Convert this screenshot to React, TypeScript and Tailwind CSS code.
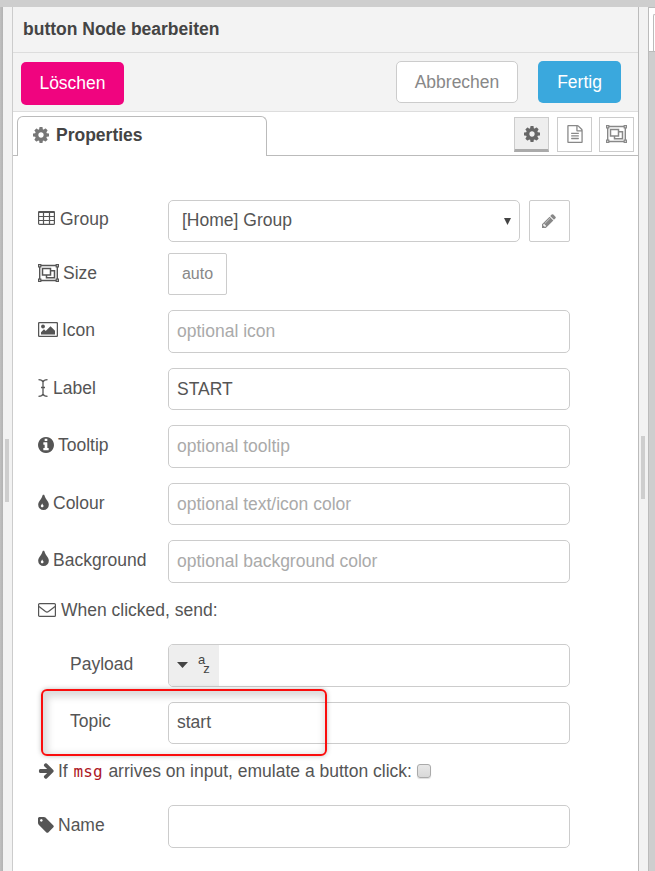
import type { ReactNode } from "react";

const paths = {
  cog: "M1152 896q0-106-75-181t-181-75-181 75-75 181 75 181 181 75 181-75 75-181zm512-109v222q0 12-8 23t-20 13l-185 28q-19 54-39 91 35 50 107 138 10 12 10 25t-9 23q-27 37-99 108t-94 71q-12 0-26-9l-138-108q-44 23-91 38-16 136-29 186-7 28-36 28h-222q-14 0-24.5-8.5t-11.5-21.5l-28-184q-49-16-90-37l-141 107q-10 9-25 9-14 0-25-11-126-114-165-168-7-10-7-23 0-12 8-23 15-21 51-66.5t54-70.5q-27-50-41-99l-183-27q-13-2-21-12.5t-8-23.5v-222q0-12 8-23t19-13l186-28q14-46 39-92-40-57-107-138-10-12-10-24 0-10 9-23 26-36 98.5-107.5t94.5-71.5q13 0 26 10l138 107q44-23 91-38 16-136 29-186 7-28 36-28h222q14 0 24.5 8.5t11.5 21.5l28 184q49 16 90 37l142-107q9-9 24-9 13 0 25 10 129 119 165 170 7 8 7 22 0 12-8 23-15 21-51 66.5t-54 70.5q26 50 41 98l183 28q13 2 21 12.5t8 23.5z",
  pencil:
    "M491 1536l91-91-235-235-91 91v107h128v128h107zm523-928q0-22-22-22-10 0-17 7l-542 542q-7 7-7 17 0 22 22 22 10 0 17-7l542-542q7-7 7-17zm-54-192l416 416-832 832h-416v-416zm683 96q0 53-37 90l-166 166-416-416 166-165q36-38 90-38 53 0 91 38l235 234q37 39 37 91z",
  info: "M1152 1376v-160q0-14-9-23t-23-9h-96v-512q0-14-9-23t-23-9h-320q-14 0-23 9t-9 23v160q0 14 9 23t23 9h96v320h-96q-14 0-23 9t-9 23v160q0 14 9 23t23 9h448q14 0 23-9t9-23zm-128-896v-160q0-14-9-23t-23-9h-192q-14 0-23 9t-9 23v160q0 14 9 23t23 9h192q14 0 23-9t9-23zm640 416q0 209-103 385.5t-279.5 279.5-385.5 103-385.5-103-279.5-279.5-103-385.5 103-385.5 279.5-279.5 385.5-103 385.5 103 279.5 279.5 103 385.5z",
  tint: "M896 1152q0-36-20-69-1-1-15.5-22.5t-25.5-38-25-44-21-50.5q-4-16-21-16t-21 16q-7 23-21 50.5t-25 44-25.5 38-15.5 22.5q-20 33-20 69 0 53 37.5 90.5t90.5 37.5 90.5-37.5 37.5-90.5zm512-128q0 212-150 362t-362 150-362-150-150-362q0-145 81-275 6-9 62.5-90.5t101-151 99.5-178 83-201.5q9-30 34-47t51-17 51.5 17 33.5 47q28 93 83 201.5t99.5 178 101 151 62.5 90.5q81 127 81 275z",
  arrow:
    "M1600 960q0 54-37 91l-651 651q-39 37-91 37-51 0-90-37l-75-75q-38-38-38-91t38-91l293-293h-704q-52 0-84.5-37.5t-32.5-90.5v-128q0-53 32.5-90.5t84.5-37.5h704l-293-294q-38-36-38-90t38-90l75-75q38-38 90-38 53 0 91 38l651 651q37 35 37 90z",
  tag: "M576 448q0-53-37.5-90.5t-90.5-37.5-90.5 37.5-37.5 90.5 37.5 90.5 90.5 37.5 90.5-37.5 37.5-90.5zm1067 576q0 53-37 90l-491 492q-39 37-91 37-53 0-90-37l-715-716q-38-37-64.5-101t-26.5-117v-416q0-52 38-90t90-38h416q53 0 117 26.5t102 64.5l715 714q37 39 37 91z",
  file: "M1596 380q28 28 48 76t20 88v1152q0 40-28 68t-68 28h-1344q-40 0-68-28t-28-68v-1600q0-40 28-68t68-28h896q40 0 88 20t76 48zm-444-244v376h376q-10-29-22-41l-313-313q-12-12-41-22zm384 1528v-1024h-416q-40 0-68-28t-28-68v-416h-768v1536h1280zm-1024-864q0-14 9-23t23-9h704q14 0 23 9t9 23v64q0 14-9 23t-23 9h-704q-14 0-23-9t-9-23v-64zm736 224q14 0 23 9t9 23v64q0 14-9 23t-23 9h-704q-14 0-23-9t-9-23v-64q0-14 9-23t23-9h704zm0 256q14 0 23 9t9 23v64q0 14-9 23t-23 9h-704q-14 0-23-9t-9-23v-64q0-14 9-23t23-9h704z",
};

const Icon = ({
  name,
  viewBox = "128 128 1536 1536",
  className = "h-4 w-4",
}: {
  name: keyof typeof paths;
  viewBox?: string;
  className?: string;
}) => (
  <svg viewBox={viewBox} fill="currentColor" className={`shrink-0 ${className}`}>
    <path d={paths[name]} />
  </svg>
);

const TableIcon = () => (
  <svg viewBox="0 0 17 14" className="mb-[2px] h-[14px] w-[17px] shrink-0">
    <rect x="0.6" y="0.6" width="15.8" height="12.8" rx="1" fill="none" stroke="currentColor" strokeWidth="1.2" />
    <path d="M0.5 1H16.5" stroke="currentColor" strokeWidth="2" />
    <path d="M1 5.5H16M1 9.5H16M5.5 2V13M11.5 2V13" stroke="currentColor" strokeWidth="1.2" />
  </svg>
);

const GroupIcon = () => (
  <svg viewBox="0 0 21 18" fill="none" stroke="currentColor" className="h-[18px] w-[21px] shrink-0">
    <path d="M3 1.5H18M3 16.5H18M1.7 3V15M19.3 3V15" strokeWidth="1.4" />
    <path d="M0.6 0.6h2.2v2.2h-2.2zM18.2 0.6h2.2v2.2h-2.2zM0.6 15.2h2.2v2.2h-2.2zM18.2 15.2h2.2v2.2h-2.2z" strokeWidth="1.2" />
    <path d="M4.5 4.5h8v6.5h-8zM12.5 6.8h4v7h-8v-2.5" strokeWidth="1.5" />
  </svg>
);

const ImageIcon = () => (
  <svg viewBox="0 0 20 15" className="h-[15px] w-5 shrink-0">
    <rect x="0.6" y="0.6" width="18.8" height="13.8" rx="1" fill="none" stroke="currentColor" strokeWidth="1.3" />
    <circle cx="5" cy="4.5" r="1.9" fill="currentColor" />
    <path d="M3 12.5V10.2L6 7.3L7.7 9L12.5 4.2L17 8.7V12.5Z" fill="currentColor" />
  </svg>
);

const CursorIcon = () => (
  <svg viewBox="0 0 10 18" fill="none" stroke="currentColor" className="mb-px h-[18px] w-[10px] shrink-0">
    <path d="M0.5 0.7Q4.3 0.7 5 3Q5.7 0.7 9.5 0.7M0.5 17.3Q4.3 17.3 5 15Q5.7 17.3 9.5 17.3M5 3V15M3 8.5H7" strokeWidth="1.3" />
  </svg>
);

const EnvelopeIcon = () => (
  <svg viewBox="0 0 18 14" fill="none" stroke="currentColor" className="h-[14px] w-[18px] shrink-0">
    <rect x="0.6" y="0.6" width="16.8" height="12.8" rx="1" strokeWidth="1.2" />
    <path d="M1 3.5L7.5 8.5Q9 9.6 10.5 8.5L17 3.5" strokeWidth="1.2" />
  </svg>
);

const TintIcon = () => (
  <Icon name="tint" viewBox="384 0 1024 1536" className="mb-[3px] h-4 w-[11px]" />
);

const FormRow = ({
  icon,
  label,
  className,
  labelClass = "gap-[5px] pb-1",
  children,
}: {
  icon?: ReactNode;
  label: string;
  className: string;
  labelClass?: string;
  children: ReactNode;
}) => (
  <div className={`flex ${className}`}>
    <label className={`flex w-[130px] shrink-0 items-center ${labelClass}`}>
      {icon}
      {label}
    </label>
    {children}
  </div>
);

const TextInput = ({
  value,
  placeholder,
  className = "",
}: {
  value?: string;
  placeholder?: string;
  className?: string;
}) => (
  <input
    type="text"
    defaultValue={value}
    placeholder={placeholder}
    className={`h-full w-[402px] rounded-[5px] border border-[#ccc] bg-white px-2 text-[#555] outline-none placeholder:text-[#aaa] ${className}`}
  />
);

const Resizer = ({ className, children }: { className: string; children: ReactNode }) => (
  <div className={`flex shrink-0 bg-[#f2f2f2] ${className}`}>{children}</div>
);

const TabButton = ({ className, children }: { className: string; children: ReactNode }) => (
  <button className={`flex h-[35px] w-[35px] items-center justify-center border border-[#ccc] ${className}`}>
    {children}
  </button>
);

export default function App() {
  return (
    <div className="flex h-[871px] w-[655px] flex-col overflow-hidden bg-[#cecece] font-['Liberation_Sans',Arial,sans-serif] text-[17.5px] leading-5 text-[#555]">
      <div className="h-[7px] shrink-0" />
      <div className="flex min-h-0 flex-1">
        <div className="w-[3px] shrink-0 bg-linear-to-r from-[#c0c0c0] to-[#b2b2b2]" />
        <Resizer className="w-[9px] pt-[432px] pl-[2px]">
          <div className="h-[63px] w-1 bg-[#cecece]" />
        </Resizer>

        <div className="flex w-[627px] shrink-0 flex-col border-x border-l-[#ccc] border-r-[#bbb] bg-white">
          <div className="flex h-[46px] shrink-0 items-center border-b border-[#ddd] bg-[#f3f3f3] pb-[2px] pl-[10px] font-bold text-[#444]">
            button Node bearbeiten
          </div>
          <div className="flex h-[59px] shrink-0 items-start border-b border-[#ddd] bg-[#f3f3f3] pr-[17px] pl-2">
            <button className="mt-[9px] h-[43px] w-[103px] rounded-[5px] bg-[#f0047f] pb-[2px] text-white">
              Löschen
            </button>
            <button className="mt-2 ml-auto h-[42px] w-[122px] rounded-[5px] border border-[#ccc] bg-white text-[#888]">
              Abbrechen
            </button>
            <button className="mt-2 ml-5 h-[42px] w-[83px] rounded-[5px] bg-[#3aa8dd] text-white">
              Fertig
            </button>
          </div>

          <div className="flex h-11 shrink-0 items-end">
            <div className="h-full w-1 border-b border-[#bbb]" />
            <div className="flex h-10 w-[250px] items-center gap-[7px] rounded-t-[6px] border border-b-0 border-[#bbb] pb-1 pl-[15px] font-bold text-[#444]">
              <Icon name="cog" className="h-4 w-4 text-[#777]" />
              Properties
            </div>
            <div className="flex h-full flex-1 items-start justify-end gap-2 border-b border-[#bbb] pt-[5px] pr-1">
              <TabButton className="border-b-[3px] border-b-[#aaa] bg-[#eee] text-[#666]">
                <Icon name="cog" className="h-4 w-4" />
              </TabButton>
              <TabButton className="pb-[2px] text-[#888]">
                <Icon name="file" viewBox="128 0 1536 1792" className="h-[18px] w-4" />
              </TabButton>
              <TabButton className="-ml-[1px] pb-[2px] text-[#888]">
                <GroupIcon />
              </TabButton>
            </div>
          </div>

          <div className="flex min-h-0 flex-1 flex-col pt-11 pl-[25px] *:shrink-0">
            <FormRow icon={<TableIcon />} label="Group" className="h-[42px]">
              <div className="flex w-[352px] items-center justify-between rounded-[5px] border border-[#ccc] pr-2 pb-[2px] pl-[13px]">
                [Home] Group
                <svg viewBox="0 0 7 7" className="mt-[3px] h-[7px] w-[7px] fill-[#444]">
                  <path d="M0 0H7L3.5 7Z" />
                </svg>
              </div>
              <button className="ml-[9px] flex w-[41px] items-center justify-center rounded-[2px] border border-[#ccc] pr-[2px] text-[#888]">
                <Icon name="pencil" className="h-[14px] w-[14px]" />
              </button>
            </FormRow>
            <FormRow
              icon={<GroupIcon />}
              label="Size"
              className="mt-[11px] h-[42px]"
              labelClass="gap-1 pb-[2px]"
            >
              <button className="w-[59px] rounded-[2px] border border-[#ccc] text-base text-[#888]">
                auto
              </button>
            </FormRow>
            <FormRow
              icon={<ImageIcon />}
              label="Icon"
              className="mt-[15px] h-[43px]"
              labelClass="gap-1 pb-1"
            >
              <TextInput placeholder="optional icon" />
            </FormRow>
            <FormRow
              icon={<CursorIcon />}
              label="Label"
              className="mt-[15px] h-[42px]"
              labelClass="gap-[5px] pb-[2px]"
            >
              <TextInput value="START" />
            </FormRow>
            <FormRow
              icon={<Icon name="info" />}
              label="Tooltip"
              className="mt-[15px] h-[43px]"
              labelClass="gap-1 pb-1"
            >
              <TextInput placeholder="optional tooltip" />
            </FormRow>
            <FormRow
              icon={<TintIcon />}
              label="Colour"
              className="mt-[15px] h-[42px]"
              labelClass="gap-1 pb-[2px]"
            >
              <TextInput placeholder="optional text/icon color" />
            </FormRow>
            <FormRow
              icon={<TintIcon />}
              label="Background"
              className="mt-[15px] h-[43px]"
              labelClass="gap-1 pb-1"
            >
              <TextInput placeholder="optional background color" />
            </FormRow>
            <div className="mt-[17px] flex h-5 items-center gap-[5px]">
              <EnvelopeIcon />
              When clicked, send:
            </div>
            <FormRow label="Payload" className="mt-6 h-[43px]" labelClass="pb-1 pl-8">
              <div className="flex w-[402px] overflow-hidden rounded-[5px] border border-[#ccc]">
                <div className="flex w-[50px] items-center bg-[#eee] pl-2">
                  <svg viewBox="0 0 11 6" className="mb-[2px] h-[6px] w-[11px] fill-[#444]">
                    <path d="M0 0H11L5.5 6Z" />
                  </svg>
                  <span className="ml-[10px] pb-[11px] text-[13px] text-[#444]">a</span>
                  <span className="-ml-[2px] pt-[7px] text-[13px] text-[#444]">z</span>
                </div>
              </div>
            </FormRow>
            <div className="relative mt-[15px]">
              <FormRow label="Topic" className="h-[42px]" labelClass="pb-1 pl-8">
                <TextInput value="start" className="pb-[2px]" />
              </FormRow>
              <div className="pointer-events-none absolute -top-[13px] left-[2.5px] h-[66.5px] w-[286.5px] rounded-[6px] border-2 border-[#fa0d0d] shadow-[0_0_5px_rgba(0,0,0,0.25),inset_2px_3px_7px_3px_rgba(0,0,0,0.14)]" />
            </div>
            <div className="mt-[17px] flex h-5 items-center gap-1">
              <Icon name="arrow" viewBox="64 160 1536 1600" />
              <span>
                If{" "}
                <code className="mr-px ml-px font-['DejaVu_Sans_Mono',monospace] text-[16px] text-[#ad1625]">
                  msg
                </code>{" "}
                arrives on input, emulate a button click:
              </span>
              <span className="ml-px h-[14px] w-[14px] rounded-[3px] border border-[#aaa] bg-linear-to-b from-[#e8e8e8] to-[#d8d8d8] shadow-[0_1px_1px_#ddd]" />
            </div>
            <FormRow
              icon={<Icon name="tag" />}
              label="Name"
              className="mt-6 h-[43px]"
              labelClass="gap-1 pb-1"
            >
              <TextInput />
            </FormRow>
          </div>
        </div>

        <Resizer className="w-[9px] pt-[429px] pl-[2px]">
          <div className="h-[63px] w-1 bg-[#cecece]" />
        </Resizer>
        <div className="flex-1 border-l border-[#bbb]">
          <div className="h-[45px] border-y border-[#bbb] bg-white pt-[6px] pl-1">
            <div className="h-full rounded-tl-[5px] border-t border-l border-[#bbb]" />
          </div>
        </div>
      </div>
    </div>
  );
}
